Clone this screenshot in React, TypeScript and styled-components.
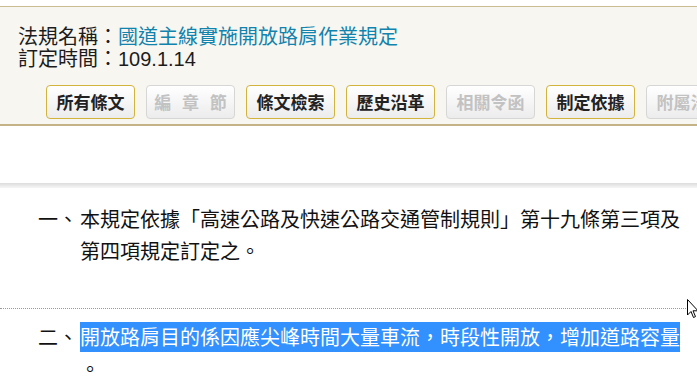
import styled, { createGlobalStyle } from "styled-components";

const GlobalStyle = createGlobalStyle`
  html, body {
    margin: 0;
    padding: 0;
    background: #ffffff;
    overflow: hidden;
  }
  body {
    font-family: "Liberation Sans", "Noto Sans CJK TC", sans-serif;
  }
`;

const Page = styled.div`
  position: relative;
  width: 697px;
  height: 383px;
  padding-top: 6px;
  box-sizing: border-box;
`;

const InfoPanel = styled.div`
  background: #f7f6f1;
  border-top: 1px solid #cbbd92;
  border-bottom: 2px solid #c4b387;
  padding: 19px 0 5px 18px;
`;

const InfoLine = styled.div`
  font-size: 20px;
  line-height: 22px;
  color: #1c1c1c;
  white-space: nowrap;
`;

const LawName = styled.span`
  color: #1283ad;
`;

const ButtonRow = styled.div`
  display: flex;
  gap: 11px;
  margin: 15px 0 0 28px;
  white-space: nowrap;
`;

const TabButton = styled.button<{ $disabled?: boolean }>`
  flex: 0 0 auto;
  width: 89px;
  height: 34px;
  padding: 0;
  border-radius: 4px;
  border: 1px solid ${(p) => (p.$disabled ? "#d6d6d6" : "#d2b33c")};
  background: linear-gradient(#ffffff, #ececec);
  color: ${(p) => (p.$disabled ? "#c2c2c2" : "#222222")};
  font-family: "Noto Sans CJK TC", sans-serif;
  font-weight: 700;
  font-size: 17px;
  line-height: 32px;
  word-spacing: 7px;
  cursor: ${(p) => (p.$disabled ? "default" : "pointer")};
`;

const Gap = styled.div`
  height: 57px;
`;

const ShadowBand = styled.div`
  height: 5px;
  background: linear-gradient(#dcdcdc, #f6f6f6);
`;

const Articles = styled.div`
  padding-top: 15px;
`;

const Article = styled.div`
  display: grid;
  grid-template-columns: 42px 601px;
  padding-left: 38px;
  font-family: "Noto Sans CJK TC", sans-serif;
  font-size: 20px;
  line-height: 32px;
  color: #111111;
`;

const Num = styled.div``;

const Body = styled.div`
  line-break: anywhere;
`;

const Selected = styled.span`
  background: #3390ff;
  color: #ffffff;
  padding: 0 0 1px;
`;

const Divider = styled.div`
  width: 690px;
  margin: 41px 0 12px;
  border-top: 1px dotted #9a9a9a;
`;

const Cursor = styled.svg`
  position: absolute;
  left: 687px;
  top: 299px;
`;

const tabs: { label: string; disabled?: boolean }[] = [
  { label: "所有條文" },
  { label: "編 章 節", disabled: true },
  { label: "條文檢索" },
  { label: "歷史沿革" },
  { label: "相關令函", disabled: true },
  { label: "制定依據" },
  { label: "附屬法規", disabled: true },
];

export default function App() {
  return (
    <>
      <GlobalStyle />
      <Page>
        <InfoPanel>
          <InfoLine>
            法規名稱：<LawName>國道主線實施開放路肩作業規定</LawName>
          </InfoLine>
          <InfoLine>訂定時間：109.1.14</InfoLine>
          <ButtonRow>
            {tabs.map((t) => (
              <TabButton key={t.label} $disabled={t.disabled}>
                {t.label}
              </TabButton>
            ))}
          </ButtonRow>
        </InfoPanel>
        <Gap />
        <ShadowBand />
        <Articles>
          <Article>
            <Num>一、</Num>
            <Body>
              本規定依據「高速公路及快速公路交通管制規則」第十九條第三項及第四項規定訂定之。
            </Body>
          </Article>
          <Divider />
          <Article>
            <Num>二、</Num>
            <Body>
              <Selected>開放路肩目的係因應尖峰時間大量車流，時段性開放，增加道路容量</Selected>
              。
            </Body>
          </Article>
        </Articles>
        <Cursor width="12" height="20" viewBox="0 0 12 20">
          <path
            d="M0.5 0.5 L0.5 16 L4 12.5 L6.5 18.5 L8.5 17.6 L6 11.8 L11 11.8 Z"
            fill="#ffffff"
            stroke="#000000"
            strokeWidth="1"
          />
        </Cursor>
      </Page>
    </>
  );
}
